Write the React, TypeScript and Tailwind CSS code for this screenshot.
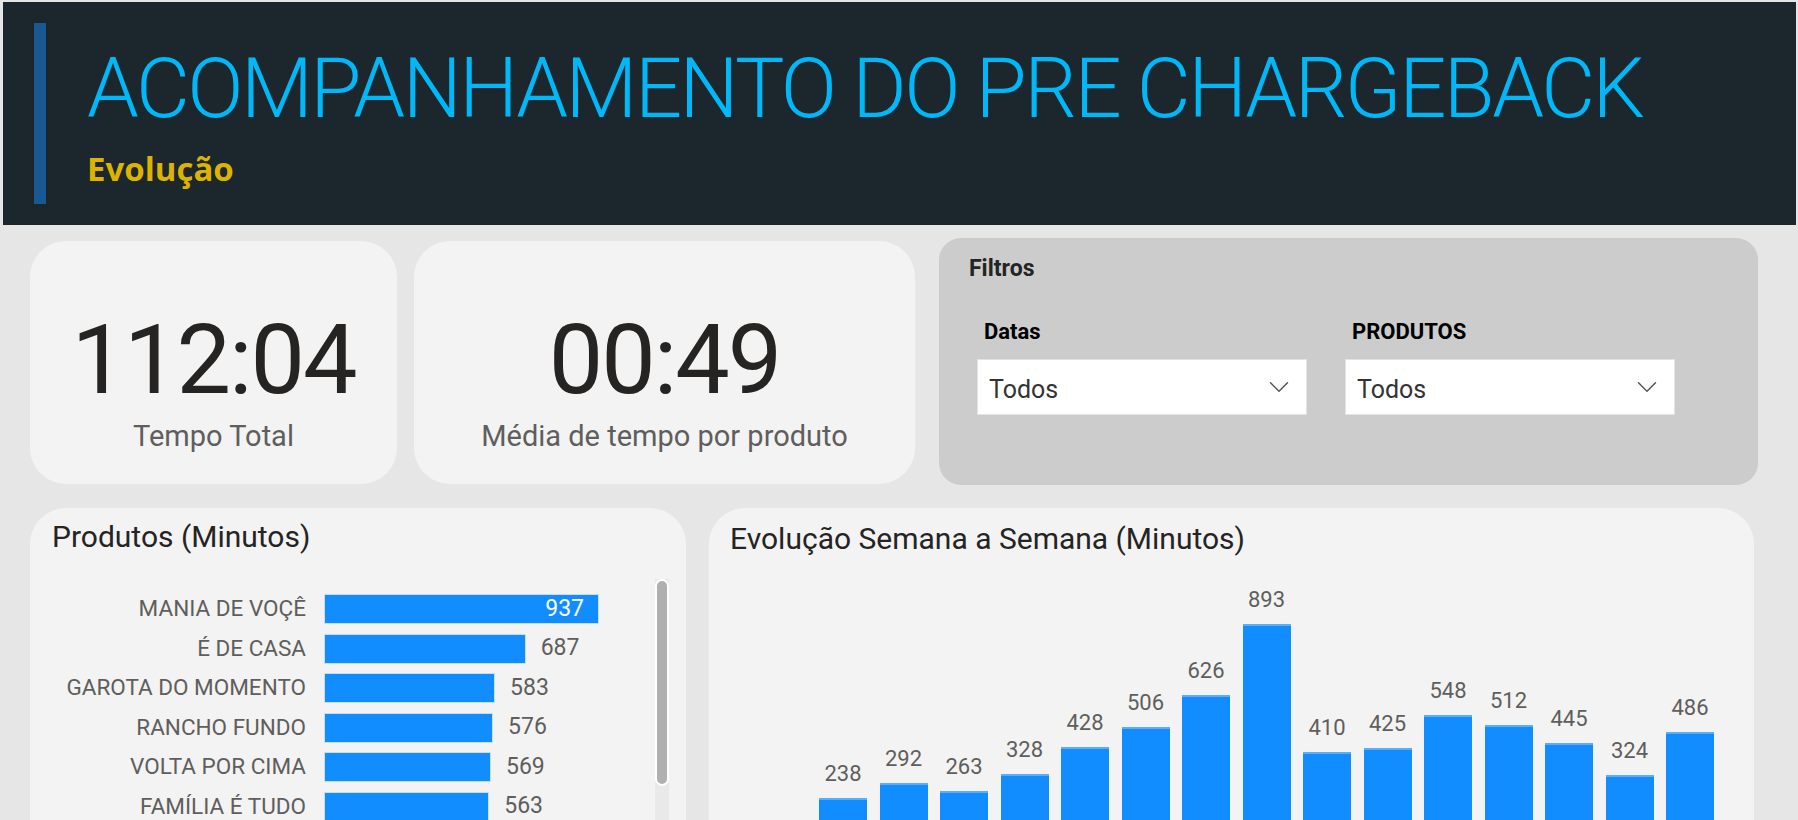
import { ChevronDown } from 'lucide-react';

const produtos = [
    { nome: 'MANIA DE VOÇÊ', valor: 937 },
    { nome: 'É DE CASA', valor: 687 },
    { nome: 'GAROTA DO MOMENTO', valor: 583 },
    { nome: 'RANCHO FUNDO', valor: 576 },
    { nome: 'VOLTA POR CIMA', valor: 569 },
    { nome: 'FAMÍLIA É TUDO', valor: 563 },
];

const semanas = [238, 292, 263, 328, 428, 506, 626, 893, 410, 425, 548, 512, 445, 324, 486];

const din = { fontFamily: 'Roboto, "Noto Sans", sans-serif' };
const segoe = { fontFamily: '"Open Sans", Lato, sans-serif' };

function Kpi({ valor, label, width }: { valor: string; label: string; width: string }) {
    return (
        <div className={`flex ${width} flex-col items-center rounded-[36px] bg-[#f3f3f3] pt-[71px]`} style={din}>
            <span className="text-[97px] leading-none tracking-[-2px] text-[#252423]">{valor}</span>
            <span className="mt-[13px] text-[29px] leading-none text-[#605e5c]">{label}</span>
        </div>
    );
}

function Dropdown({ label }: { label: string }) {
    return (
        <div className="flex w-[330px] flex-col" style={din}>
            <span className="pl-[7px] text-[22px] font-bold leading-none text-black">{label}</span>
            <div className="mt-[16px] flex h-[56px] items-center justify-between border border-[#e3e3e3] bg-white pl-[11px] pr-[10px]">
                <span className="pt-[6px] text-[25px] text-[#333333]">Todos</span>
                <ChevronDown size={34} strokeWidth={1} className="text-[#555555]" />
            </div>
        </div>
    );
}

export default function App() {
    const max = 937;
    return (
        <div className="h-[820px] w-[1798px] overflow-hidden bg-[#e6e6e6] pl-[3px] pr-[2px] pt-[2px]">
            {/* Header */}
            <div className="flex h-[223px] bg-[#1c262d] pl-[31px] pt-[21px]">
                <div className="h-[181px] w-[12px] bg-[#1a5894]" />
                <div className="ml-[41px] flex flex-col">
                    <h1
                        className="mt-[24px] whitespace-nowrap text-[83px] font-light leading-none tracking-[-2.5px] text-[#00b8f8]"
                        style={din}
                    >
                        ACOMPANHAMENTO DO PRE CHARGEBACK
                    </h1>
                    <span className="mt-[22px] text-[33px] font-bold leading-none text-[#dcb300]" style={segoe}>
                        Evolução
                    </span>
                </div>
            </div>

            {/* Top row */}
            <div className="mt-[13px] flex h-[247px] items-stretch pl-[27px]">
                <div className="mt-[3px] flex h-[243px] gap-[17px]">
                    <Kpi valor="112:04" label="Tempo Total" width="w-[367px]" />
                    <Kpi valor="00:49" label="Média de tempo por produto" width="w-[501px]" />
                </div>
                <div className="ml-[24px] flex h-[247px] w-[819px] flex-col rounded-[22px] bg-[#cccccc] pl-[38px] pt-[14px]">
                    <span className="-ml-[8px] text-[23px] font-bold text-[#252423]" style={din}>
                        Filtros
                    </span>
                    <div className="mt-[34px] flex gap-[38px]">
                        <Dropdown label="Datas" />
                        <Dropdown label="PRODUTOS" />
                    </div>
                </div>
            </div>

            {/* Bottom row */}
            <div className="mt-[23px] flex gap-[23px] pl-[27px]">
                <div className="flex h-[400px] w-[656px] flex-col rounded-[36px] bg-[#f3f3f3] pl-[22px] pt-[14px]" style={din}>
                    <span className="text-[30px] leading-none text-[#252423]">Produtos (Minutos)</span>
                    <div className="mt-[20px] flex flex-1">
                        <div className="mt-[22px] flex flex-1 flex-col gap-[9.5px]">
                            {produtos.map((p) => {
                                const w = (p.valor / max) * 275;
                                const inside = p.valor === max;
                                return (
                                    <div key={p.nome} className="flex h-[30px] items-center">
                                        <span className="w-[272px] pr-[18px] text-right text-[22.5px] text-[#605e5c]">{p.nome}</span>
                                        <div
                                            className="flex h-[30px] items-center justify-end border border-[#c9def3] bg-[#118dff] pr-[14px]"
                                            style={{ width: w }}
                                        >
                                            {inside && <span className="text-[23px] text-white">{p.valor}</span>}
                                        </div>
                                        {!inside && <span className="ml-[15px] text-[23px] text-[#605e5c]">{p.valor}</span>}
                                    </div>
                                );
                            })}
                        </div>
                        {/* scrollbar */}
                        <div className="mr-[17px] mt-[7px] w-[14px] bg-[#e9e9e9]">
                            <div className="h-[207px] w-[14px] rounded-full border-2 border-white bg-[#b0b0b0]" />
                        </div>
                    </div>
                </div>

                <div className="flex h-[400px] w-[1045px] flex-col rounded-[36px] bg-[#f3f3f3] pl-[21px] pt-[16px]" style={din}>
                    <span className="text-[30px] leading-none text-[#252423]">Evolução Semana a Semana (Minutos)</span>
                    <div className="ml-[89px] mt-[27px] flex h-[280px] items-end gap-[12.5px]">
                        {semanas.map((v, i) => (
                            <div key={i} className="flex w-[48px] flex-col items-center">
                                <span className="mb-[13px] text-[22px] leading-none text-[#605e5c]">{v}</span>
                                <div className="w-[48px] border-t-2 border-[#5aaef5] bg-[#118dff]" style={{ height: v * 0.2656 }} />
                            </div>
                        ))}
                    </div>
                </div>
            </div>
        </div>
    );
}
